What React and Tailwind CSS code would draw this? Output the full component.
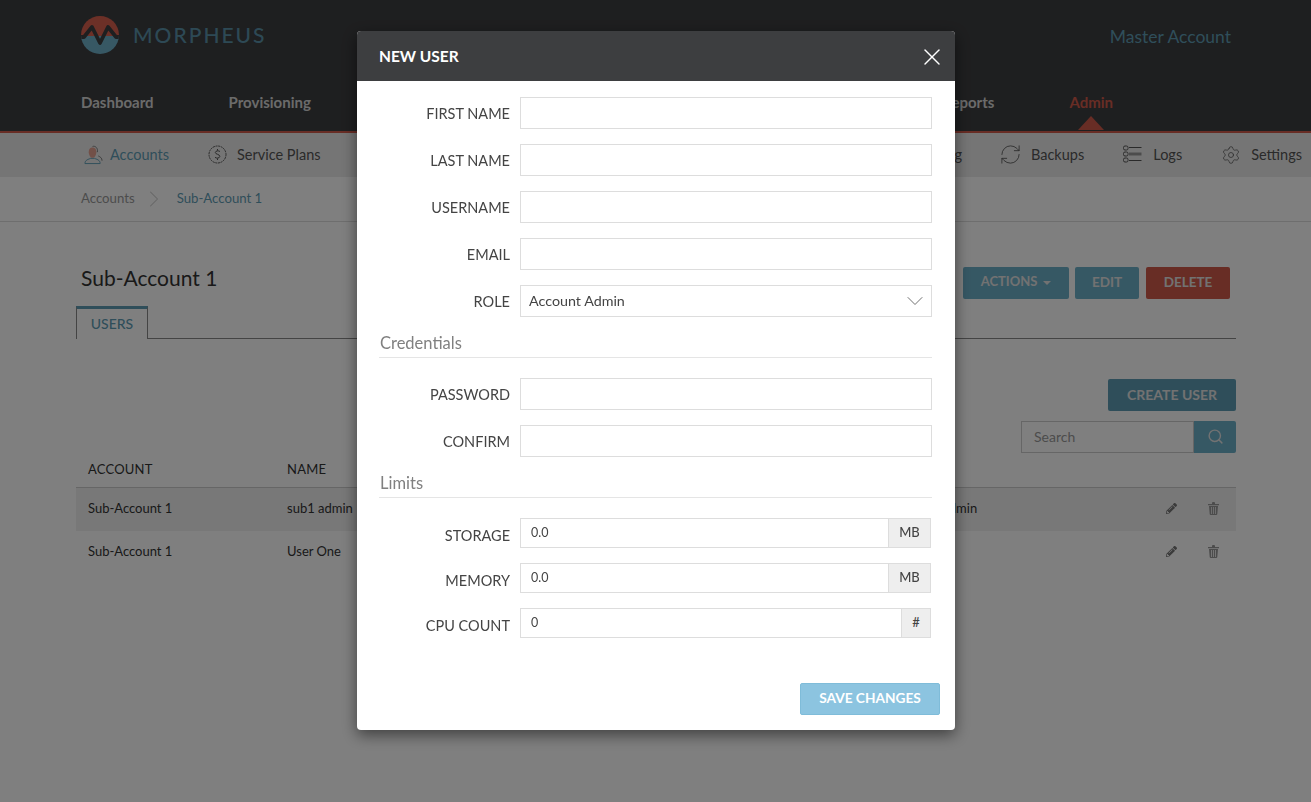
import { ChevronDown, ChevronRight, RefreshCw, Search, Settings, X } from 'lucide-react';
import { FaPencilAlt } from 'react-icons/fa';

const FONT = 'font-["Lato","Liberation_Sans",sans-serif]';

const fields = ['FIRST NAME', 'LAST NAME', 'USERNAME', 'EMAIL'];
const users = [
    { account: 'Sub-Account 1', name: 'sub1 admin', role: 'Account Admin', shaded: true },
    { account: 'Sub-Account 1', name: 'User One', role: 'User', shaded: false },
];

function Logo() {
    return (
        <div className="flex items-center gap-[14px]">
            <svg width="38" height="38" viewBox="0 0 38 38">
                <defs>
                    <clipPath id="logo-circle">
                        <circle cx="19" cy="19" r="19" />
                    </clipPath>
                </defs>
                <g clipPath="url(#logo-circle)">
                    <rect width="38" height="20" fill="#d9604e" />
                    <rect y="20" width="38" height="18" fill="#6fb0c8" />
                    <path d="M-1 21 H3 L11 11 L19 27 L27 11 L35 21 H39" fill="none" stroke="#3d3e40" strokeWidth="3.800" strokeLinejoin="round" />
                </g>
            </svg>
            <span className="text-[21px] font-medium tracking-[2px] text-[#5b93aa]">MORPHEUS</span>
        </div>
    );
}

function PlansIcon() {
    return (
        <svg width="19" height="19" viewBox="0 0 19 19" fill="none" stroke="#444" strokeWidth="0.900">
            <circle cx="9.500" cy="9.500" r="8.500" strokeDasharray="2 0.700" />
            <path d="M12 6.500 C11 5.500 7.500 5.500 7.300 7.500 C7.200 9.500 12 9 11.800 11.500 C11.600 13.500 8 13.500 7 12.300 M9.500 4 V5.500 M9.500 13.500 V15" />
        </svg>
    );
}

function AccountsIcon() {
    return (
        <svg width="19" height="20" viewBox="0 0 20 20" fill="none">
            <path d="M1 19 C1 15 5 14.500 7 13.500 L11 13.500 C13 14.500 17 15 17 19 Z" stroke="#5f9db5" />
            <path d="M5 7 C5 3 7 2 9 2 C11 2 13 3 13 7 C13 10 11 13 9 13 C7 13 5 10 5 7 Z" fill="#e5a090" />
            <path d="M9 1 C12 0 15 3 14 7 M15 11 C17 12 19 13 19 16" stroke="#777" />
        </svg>
    );
}

function LogsIcon() {
    return (
        <svg width="19" height="19" viewBox="0 0 19 19" fill="none" stroke="#555">
            <rect x="0.500" y="1" width="4.500" height="4" rx="1.500" />
            <rect x="0.500" y="7" width="4.500" height="4" rx="1.500" />
            <rect x="0.500" y="13" width="4.500" height="4" rx="1.500" />
            <path d="M6 2.500 H18.500 M6 15.500 H18.500" />
            <path d="M6 9 H18.500" strokeWidth="3" stroke="#999" />
        </svg>
    );
}

function TrashIcon() {
    return (
        <svg width="11" height="13" viewBox="0 0 11 13" fill="#999">
            <path d="M0 2 H4 V1 Q4 0 5 0 H6 Q7 0 7 1 V2 H11 V3.200 H0 Z" />
            <path fillRule="evenodd" d="M1 4 H10 L9.300 12 Q9.200 13 8.300 13 H2.700 Q1.800 13 1.700 12 Z M3 5 V12 H3.800 V5 Z M5.100 5 V12 H5.900 V5 Z M7.200 5 V12 H8 V5 Z" />
        </svg>
    );
}

function SubNavItem({ icon, label, active, gap = 'gap-[11px]' }) {
    return (
        <div className={`flex items-center ${gap}`}>
            {icon}
            <span className={active ? 'text-[#5f9db5]' : 'text-[#555]'}>{label}</span>
        </div>
    );
}

function Header() {
    return (
        <header className="bg-[#3d3e40] border-b-2 border-[#d05a4a]">
            <div className="flex h-[75px] items-center justify-between pb-[5px] pl-[81px] pr-[80px]">
                <Logo />
                <span className="mt-[5px] text-[17.500px] text-[#5f9db5]">Master Account</span>
            </div>
            <nav className="flex h-[56px] items-center pb-[2px] pl-[81px] text-[15px] font-bold text-[#d6d6d6]">
                <div className="flex gap-[75px]">
                    <span>Dashboard</span>
                    <span>Provisioning</span>
                </div>
                <div className="ml-auto flex gap-[75px] pr-[198px]">
                    <span>Reports</span>
                    <span className="relative text-[#d05a4a]">
                        Admin
                        <span className="absolute left-1/2 top-[25px] h-0 w-0 -translate-x-1/2 border-x-[13px] border-b-[14px] border-x-transparent border-b-[#d05a4a]" />
                    </span>
                </div>
            </nav>
        </header>
    );
}

function SubNav() {
    return (
        <div className="flex h-[44px] items-center bg-[#ebebeb] pb-px pl-[84px] pr-[9px] text-[14.500px]">
            <div className="flex gap-[39px]">
                <SubNavItem icon={<AccountsIcon />} label="Accounts" active gap="gap-[7px]" />
                <SubNavItem icon={<PlansIcon />} label="Service Plans" gap="gap-[10px]" />
            </div>
            <div className="ml-auto flex gap-[39px]">
                <SubNavItem icon={<Settings size={19} strokeWidth={1} color="#555" />} label="Monitoring" />
                <SubNavItem icon={<RefreshCw size={23} strokeWidth={0.900} color="#555" className="-mx-[2px]" />} label="Backups" />
                <SubNavItem icon={<LogsIcon />} label="Logs" gap="gap-[11px]" />
                <SubNavItem icon={<Settings size={20} strokeWidth={0.900} color="#555" />} label="Settings" gap="gap-[10px]" />
            </div>
        </div>
    );
}

function PageButton({ label, color, caret, className }) {
    return (
        <button className={`flex h-[32px] items-center justify-center gap-[6px] rounded-[2px] pb-[2px] font-bold text-[#e4e4e4] ${color} ${className}`}>
            {label}
            {caret && <span className="mt-[2px] h-0 w-0 border-x-[4px] border-t-[4px] border-x-transparent border-t-[#e4e4e4]" />}
        </button>
    );
}

function Page() {
    return (
        <main className="pl-[76px] pr-[75px]">
            <div className="flex items-center justify-between pl-[5px] pr-[6px] pt-[45px]">
                <h1 className="-mt-[10px] text-[21px] text-[#333]">Sub-Account 1</h1>
                <div className="flex gap-[6px]">
                    <PageButton label="ACTIONS" caret color="bg-[#6db0c9]" className="w-[106px] text-[13px]" />
                    <PageButton label="EDIT" color="bg-[#6db0c9]" className="w-[64px] text-[13.500px]" />
                    <PageButton label="DELETE" color="bg-[#d05a4a]" className="ml-px w-[84px] text-[13.500px]" />
                </div>
            </div>
            <div className="mt-[7px] border-b border-[#888]">
                <div className="-mb-px h-[33px] w-[72px] border-x border-t-[3px] border-x-[#888] border-t-[#5f9db5] bg-white text-center text-[14px] font-medium leading-[30px] text-[#5f9db5]">
                    USERS
                </div>
            </div>
            <div className="mt-[40px] flex justify-end">
                <PageButton label="CREATE USER" color="bg-[#5f9db5]" className="w-[128px] text-[14px]" />
            </div>
            <div className="mt-[10px] flex justify-end">
                <div className="flex h-[32px] w-[173px] items-center border border-[#ccc] pb-px pl-[12px] text-[14px] text-[#999]">Search</div>
                <div className="flex h-[32px] w-[42px] items-center justify-center rounded-r-[2px] bg-[#6db0c9] pb-[2px]">
                    <Search size={17} color="#e4e4e4" strokeWidth={2} />
                </div>
            </div>
            <div className="text-[13px] text-[#333]">
                <div className="flex h-[35px] items-center border-b border-[#ccc] tracking-[0.200px]">
                    <span className="w-[211px] pl-[12px]">ACCOUNT</span>
                    <span>NAME</span>
                </div>
                {users.map((user) => (
                    <div key={user.name} className={`flex h-[43px] items-center pb-px ${user.shaded ? 'bg-[#f0f0f0]' : ''}`}>
                        <span className="w-[211px] pl-[12px]">{user.account}</span>
                        <span className="w-[603px]">{user.name}</span>
                        <span className="flex-1">{user.role}</span>
                        <FaPencilAlt size={11} color="#777" className="-mt-[2px] mr-[31px]" />
                        <div className="-mt-[2px] mr-[17px]">
                            <TrashIcon />
                        </div>
                    </div>
                ))}
            </div>
        </main>
    );
}

function Label({ children, className = 'pt-[2px]' }) {
    return <label className={`w-[131px] shrink-0 text-right text-[14.500px] text-[#444] ${className}`}>{children}</label>;
}

function TextRow({ label }) {
    return (
        <div className="flex items-center gap-[10px]">
            <Label>{label}</Label>
            <input className="h-[32px] w-[412px] border border-[#ddd] bg-white px-[8px] outline-none" />
        </div>
    );
}

function Heading({ children }) {
    return (
        <h3 className="mb-[20px] mt-[13px] border-b border-[#e5e5e5] pb-px pl-px text-[16.500px] leading-[26px] text-[#808080]">
            {children}
        </h3>
    );
}

function AddonRow({ label, value, unit, unitWidth }) {
    return (
        <div className="flex items-center gap-[10px]">
            <Label className="pt-[5px]">{label}</Label>
            <div className="flex h-[30px] w-[411px] border border-[#ddd] text-[12.500px] text-[#444]">
                <input defaultValue={value} className="min-w-0 flex-1 bg-white px-[10px] pt-px outline-none" />
                <span className={`flex items-center justify-center border-l border-[#ddd] bg-[#eeeeee] text-[13px] font-medium ${unitWidth}`}>{unit}</span>
            </div>
        </div>
    );
}

function NewUserModal() {
    return (
        <div className="fixed inset-0 bg-black/50 pl-[357px] pt-[31px]">
            <div className="w-[598px] overflow-hidden rounded-[4px] bg-white shadow-[0_5px_15px_rgba(0,0,0,0.5)]">
                <div className="flex h-[50px] items-center justify-between bg-[#3d3e40] pl-[22px] pr-[9px]">
                    <h2 className="mt-[2px] text-[15.500px] font-bold text-white">NEW USER</h2>
                    <X size={28} color="white" strokeWidth={1.200} className="mt-[2px]" />
                </div>
                <div className="pl-[22px] pr-[23px] pt-[16px]">
                    <div className="flex flex-col gap-[15px]">
                        {fields.map((field) => (
                            <TextRow key={field} label={field} />
                        ))}
                        <div className="flex items-center gap-[10px]">
                            <Label>ROLE</Label>
                            <div className="flex h-[32px] w-[412px] items-center justify-between border border-[#ddd] pl-[8px] pr-[2px] text-[14.300px] text-[#444]">
                                Account Admin
                                <ChevronDown size={28} color="#666" strokeWidth={0.800} />
                            </div>
                        </div>
                    </div>
                    <Heading>Credentials</Heading>
                    <div className="flex flex-col gap-[15px]">
                        <TextRow label="PASSWORD" />
                        <TextRow label="CONFIRM" />
                    </div>
                    <Heading>Limits</Heading>
                    <div className="flex flex-col gap-[15px]">
                        <AddonRow label="STORAGE" value="0.0" unit="MB" unitWidth="w-[42px]" />
                        <AddonRow label="MEMORY" value="0.0" unit="MB" unitWidth="w-[42px]" />
                        <AddonRow label="CPU COUNT" value="0" unit="#" unitWidth="w-[29px]" />
                    </div>
                </div>
                <div className="flex justify-end pb-[15px] pr-[15px] pt-[45px]">
                    <button className="h-[32px] w-[140px] rounded-[2px] border border-[#7fbcd9] bg-[#8cc4e0] pb-[2px] text-[13.700px] font-bold text-white">
                        SAVE CHANGES
                    </button>
                </div>
            </div>
        </div>
    );
}

export default function App() {
    return (
        <div className={`min-h-screen bg-white ${FONT}`}>
            <Header />
            <SubNav />
            <div className="flex h-[45px] items-center border-b border-[#ddd] pl-[81px] text-[13.200px]">
                <span className="text-[#999]">Accounts</span>
                <ChevronRight size={28} color="#ccc" strokeWidth={0.900} className="ml-[5px] mr-[9px]" />
                <span className="text-[#5f9db5]">Sub-Account 1</span>
            </div>
            <Page />
            <NewUserModal />
        </div>
    );
}
